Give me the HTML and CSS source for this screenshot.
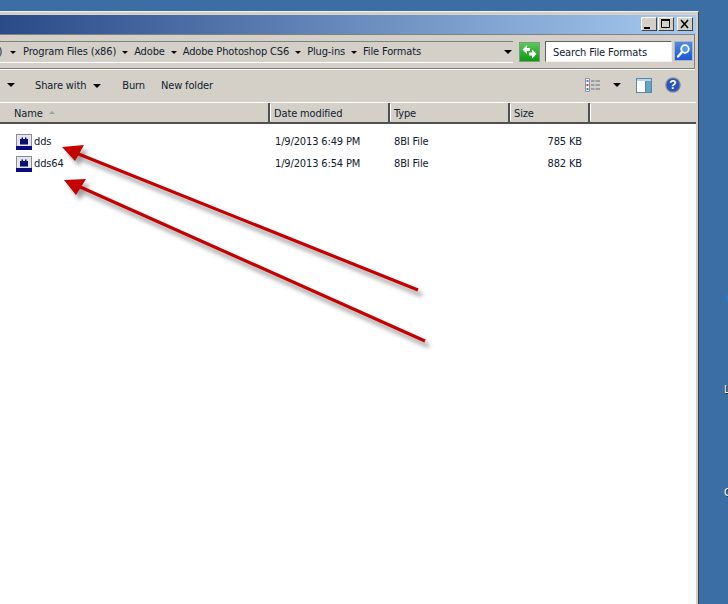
FILE: index.html
```html
<!DOCTYPE html>
<html lang="en">
<head>
<meta charset="utf-8">
<title>File Formats</title>
<link rel="stylesheet" href="styles.css">
</head>
<body>
<div class="window">
  <div class="titlebar">
    <div class="winbtns">
      <button class="winbtn"><svg width="15" height="14" viewBox="0 0 15 14"><path d="M3 10h6v2H3z" fill="#000"/></svg></button>
      <button class="winbtn"><svg width="15" height="14" viewBox="0 0 15 14"><path d="M3.500 3.500h8v7h-8z" fill="none" stroke="#000"/><path d="M3 2h9v2H3z" fill="#000"/></svg></button>
      <button class="winbtn close"><svg width="15" height="14" viewBox="0 0 15 14"><path d="M4 3l7 8M11 3l-7 8" stroke="#000" stroke-width="1.600" fill="none"/></svg></button>
    </div>
  </div>
  <div class="addressarea">
    <div class="crumbs">
      <span class="crumb clipped">c:)</span><i class="tri small"></i>
      <span class="crumb">Program Files (x86)</span><i class="tri small"></i>
      <span class="crumb">Adobe</span><i class="tri small"></i>
      <span class="crumb">Adobe Photoshop CS6</span><i class="tri small"></i>
      <span class="crumb">Plug-ins</span><i class="tri small"></i>
      <span class="crumb">File Formats</span>
      <i class="tri drop"></i>
    </div>
    <button class="gobtn"><svg width="21" height="20" viewBox="0 0 21 20"><path d="M3.500 7.500L8 3v3h3v3H8v3z" fill="#fff"/><path d="M17.500 12L13 16.500v-3h-3v-3h3V7.500z" fill="#fff"/></svg></button>
    <div class="searchbox">Search File Formats</div>
    <button class="searchbtn"><svg width="19" height="20" viewBox="0 0 19 20"><circle cx="11" cy="8" r="3.800" fill="#5a9ae0" stroke="#fff" stroke-width="1.800"/><path d="M8 11L4 15.500" stroke="#fff" stroke-width="2.400" stroke-linecap="round"/></svg></button>
  </div>
  <div class="toolbar">
    <i class="tri first"></i>
    <span class="tool share">Share with</span><i class="tri"></i>
    <span class="tool burn">Burn</span>
    <span class="tool newfolder">New folder</span>
    <svg class="viewicon" width="15" height="14" viewBox="0 0 15 14"><path d="M.5.500h4v13h-4z" fill="#fff" stroke="#8a94a0"/><path d="M1.500 2h2v2h-2zM1.500 10h2v2h-2z" fill="#5a78a8"/><path d="M1.500 6h2v2h-2z" fill="#d03030"/><path d="M6 3h3.500M10.500 3H15M6 7h3.500M10.500 7H15M6 11h3.500M10.500 11H15" stroke="#5f6f80"/></svg>
    <i class="tri viewdrop"></i>
    <svg class="paneicon" width="16" height="15" viewBox="0 0 16 15"><rect x=".5" y=".5" width="15" height="14" fill="#fff" stroke="#5a87a8"/><rect x="1" y="1" width="14" height="2" fill="#b8d4e8"/><rect x="10" y="3" width="5" height="11" fill="#5fa5c9"/><path d="M9.500 3v11" stroke="#5a87a8"/></svg>
    <svg class="helpicon" width="16" height="16" viewBox="0 0 16 16"><circle cx="8" cy="8" r="7.800" fill="#8a8f99"/><circle cx="8" cy="8" r="6.600" fill="#2a55b8"/><text x="8" y="12" text-anchor="middle" class="helpq">?</text></svg>
  </div>
  <div class="colheads">
    <div class="colhead name">Name<i class="sortup"></i></div>
    <div class="colhead">Date modified</div>
    <div class="colhead">Type</div>
    <div class="colhead">Size</div>
    <div class="colhead rest"></div>
  </div>
  <div class="list">
    <div class="row">
      <div class="cell namecell">
        <svg class="fileicon" width="16" height="16" viewBox="0 0 16 16"><rect x=".5" y=".5" width="15" height="15" fill="#e4e4ea" stroke="#8c8c98"/><rect y="12" width="16" height="4" fill="#0a0a80"/><path d="M4 10.500V5h1.500V3.500h1.500V5h2V3.500h1.500V5H12v5.500z" fill="#0a1070"/></svg>
        <span>dds</span>
      </div>
      <div class="cell">1/9/2013 6:49 PM</div>
      <div class="cell">8BI File</div>
      <div class="cell size">785 KB</div>
    </div>
    <div class="row">
      <div class="cell namecell">
        <svg class="fileicon" width="16" height="16" viewBox="0 0 16 16"><rect x=".5" y=".5" width="15" height="15" fill="#e4e4ea" stroke="#8c8c98"/><rect y="12" width="16" height="4" fill="#0a0a80"/><path d="M4 10.500V5h1.500V3.500h1.500V5h2V3.500h1.500V5H12v5.500z" fill="#0a1070"/></svg>
        <span>dds64</span>
      </div>
      <div class="cell">1/9/2013 6:54 PM</div>
      <div class="cell">8BI File</div>
      <div class="cell size">882 KB</div>
    </div>
  </div>
</div>
<svg class="arrows" width="728" height="604" viewBox="0 0 728 604">
  <defs>
    <filter id="soft" x="-10%" y="-10%" width="120%" height="130%"><feGaussianBlur stdDeviation="2.200"/></filter>
  </defs>
  <g opacity=".6" filter="url(#soft)" transform="translate(4 5)">
    <path d="M418 290L76 153M425 341L78 186" stroke="#666" stroke-width="4" fill="none"/>
    <path d="M62 147L84 145L75 161zM64 180L86 179L76 195z" fill="#666"/>
  </g>
  <path d="M418 290L76 153M425 341L78 186" stroke="#c40000" stroke-width="3.200" fill="none"/>
  <path d="M62 147L84 145L75 161zM64 180L86 179L76 195z" fill="#c40000"/>
</svg>
<div class="deskicon"></div>
<span class="desklabel l1">L</span>
<span class="desklabel l2">C</span>
</body>
</html>
```
FILE: styles.css
```css
* { box-sizing: border-box; }
html, body { margin: 0; height: 100%; }
body {
  width: 728px;
  height: 604px;
  overflow: hidden;
  position: relative;
  background: #3a6ea5;
  font-family: "DejaVu Sans Condensed", "DejaVu Sans", sans-serif;
  font-stretch: condensed;
  font-size: 11px;
  letter-spacing: -0.14px;
  color: #10202f;
}
.window {
  width: 699px;
  height: 604px;
  margin-top: 11px;
  background: #d4d0c8;
  border-top: 1px solid #f4f2ee;
  border-right: 1px solid #404040;
  padding: 3px 2px 0 0;
  display: flex;
  flex-direction: column;
}
.titlebar {
  height: 19px;
  flex: none;
  background: linear-gradient(90deg, #2a4a88, #a6caf0);
  display: flex;
  justify-content: flex-end;
  padding: 2px 3px 0 0;
}
.winbtns { display: flex; gap: 1px; }
.winbtn {
  width: 16px;
  height: 14px;
  padding: 0;
  background: #d4d0c8;
  border: 1px solid;
  border-color: #fff #404040 #404040 #fff;
  display: flex;
}
.winbtn svg { margin: -1px; }
.winbtn.close { margin-left: 2px; }
.addressarea {
  height: 35px;
  flex: none;
  margin-right: 1px;
  border-top: 1px solid #808080;
  border-bottom: 1px solid #808080;
  border-right: 1px solid #808080;
  box-shadow: 0 1px 0 #fff;
  padding: 6px 0 0;
  display: flex;
  align-items: flex-start;
}
.crumbs {
  width: 513px;
  height: 22px;
  flex: none;
  display: flex;
  align-items: center;
  padding-bottom: 2px;
  border-top: 1px solid #808080;
  border-bottom: 1px solid #fff;
  overflow: hidden;
  white-space: nowrap;
}
.clipped { margin-left: -10px; width: 13px; flex: none; }
.tri {
  display: block;
  flex: none;
  width: 0;
  height: 0;
  border-left: 4px solid transparent;
  border-right: 4px solid transparent;
  border-top: 4px solid #000;
}
.tri.small {
  border-left-width: 3px;
  border-right-width: 3px;
  border-top-width: 3px;
  margin: 2px 6px 0;
}
.clipped + .tri.small { margin: 2px 7px 0; }
.tri.drop { margin: 2px 1px 0 auto; }
.gobtn {
  width: 21px;
  height: 20px;
  margin: 1px 5px 0 6px;
  padding: 0;
  flex: none;
  border: 1px solid #7f9a7f;
  background: linear-gradient(#58c858, #0f9a12);
  display: flex;
}
.gobtn svg { margin: -1px; }
.searchbox {
  width: 127px;
  height: 21px;
  flex: none;
  background: #fff;
  border: 1px solid;
  border-color: #606060 #f4f2ee #f4f2ee #606060;
  padding: 4px 0 0 7px;
}
.searchbtn {
  width: 19px;
  height: 20px;
  margin: 0 0 0 2px;
  padding: 0;
  flex: none;
  border: 1px solid #a8b8d0;
  background: linear-gradient(#4f8ae0, #1a58d0);
  display: flex;
}
.searchbtn svg { margin: -1px; }
.toolbar {
  height: 32px;
  flex: none;
  margin-top: 1px;
  padding: 0 15px 2px 0;
  display: flex;
  align-items: center;
}
.tri.first { margin-left: 7px; }
.share { margin-left: 20px; }
.toolbar .tool + .tri { margin: 2px 0 0 7px; }
.burn { margin-left: 21px; }
.newfolder { margin-left: 16px; }
.viewicon { margin-left: auto; }
.tri.viewdrop { margin-left: 13px; }
.paneicon { margin-left: 15px; }
.helpicon { margin-left: 13px; }
.helpq { font: bold 12px "Liberation Sans", sans-serif; fill: #fff; letter-spacing: 0; }
.colheads {
  height: 22px;
  flex: none;
  display: grid;
  grid-template-columns: 270px 120px 120px 80px 106px;
  border-top: 1px solid #fff;
  border-bottom: 2px solid #505050;
}
.colhead {
  border-right: 2px solid #505050;
  box-shadow: 2px 0 0 -1px #fff;
  padding: 4px 0 0 4px;
  overflow: hidden;
}
.colhead.name { padding-left: 14px; display: flex; align-items: flex-start; }
.sortup {
  width: 0;
  height: 0;
  margin: 4px 0 0 6px;
  border-left: 3px solid transparent;
  border-right: 3px solid transparent;
  border-bottom: 3px solid #a0a0a0;
}
.colhead.rest { border-right: 0; box-shadow: none; }
.list {
  flex: 1;
  background: #fff;
  padding-top: 6px;
}
.row {
  height: 22px;
  display: grid;
  grid-template-columns: 275px 119px 120px 68px;
  align-items: center;
}
.namecell { display: flex; align-items: center; gap: 2px; padding-left: 16px; }
.size { text-align: right; }
.fileicon { flex: none; margin-top: 1px; }
.arrows { position: absolute; left: 0; top: 0; pointer-events: none; }
.deskicon {
  position: absolute;
  left: 726px;
  top: 293px;
  width: 6px;
  height: 10px;
  background: #2a78c8;
  border-radius: 50%;
}
.desklabel {
  position: absolute;
  left: 724px;
  color: #fff;
  text-shadow: 1px 1px 0 #222;
  font-size: 11px;
}
.l1 { top: 383px; color: #fff6c8; }
.l2 { top: 486px; }
```
